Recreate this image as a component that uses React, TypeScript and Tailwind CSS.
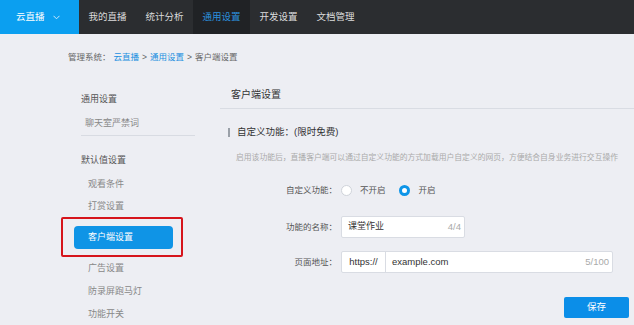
import React from "react";

const font = { fontFamily: '"Liberation Sans", "Noto Sans CJK SC", sans-serif' };

function Radio({ checked }: { checked?: boolean }) {
  return checked ? (
    <span className="w-[11px] h-[11px] rounded-full border-[3px] border-[#0e95e8] bg-white" />
  ) : (
    <span className="w-[11px] h-[11px] rounded-full border border-[#cfd3da] bg-white" />
  );
}

export default function App() {
  const tabs = ["我的直播", "统计分析", "通用设置", "开发设置", "文档管理"];
  return (
    <div style={font} className="w-[634px] h-[325px] overflow-hidden bg-[#edeef3] flex flex-col">
      {/* top nav */}
      <div className="h-[34px] shrink-0 flex bg-[#2b2d30]">
        <div className="w-[79px] bg-[#0b9ff0] flex items-center pl-[16px] gap-[8px] text-white text-[9.5px]">
          <span>云直播</span>
          <svg width="7" height="5" viewBox="0 0 7 5" className="mt-[1px]">
            <path d="M0.5 0.8 L3.5 3.8 L6.5 0.8" fill="none" stroke="#cfe9fb" strokeWidth="1" />
          </svg>
        </div>
        {tabs.map((t, i) => (
          <div
            key={t}
            className={
              i === 2
                ? "w-[57px] flex items-center justify-center text-[9.5px] bg-[#202225] text-[#2b8fdc]"
                : "w-[57px] flex items-center justify-center text-[9.5px] text-[#dcdcdc]"
            }
          >
            {t}
          </div>
        ))}
      </div>

      {/* breadcrumb */}
      <div className="pl-[68px] pt-[17px] h-[46px] shrink-0 text-[8.5px] leading-[12px] text-[#666]">
        <span>管理系统：</span>
        <span className="ml-[3px] text-[#1a8fe0]">云直播</span>
        <span className="mx-[3px]">&gt;</span>
        <span className="text-[#1a8fe0]">通用设置</span>
        <span className="mx-[3px]">&gt;</span>
        <span>客户端设置</span>
      </div>

      {/* body */}
      <div className="flex flex-1">
        {/* sidebar */}
        <div className="ml-[61px] w-[140px] flex flex-col text-[9px]">
          <div className="h-[24px] mt-[8px] flex items-center pl-[20px] text-[#555]">通用设置</div>
          <div className="h-[23px] flex items-center pl-[24px] text-[#888]">聊天室严禁词</div>
          <div className="ml-[20px] w-[114px] h-px bg-[#d8dbe2]" />
          <div className="h-[24px] mt-[13px] flex items-center pl-[20px] text-[#555]">默认值设置</div>
          <div className="h-[24px] flex items-center pl-[27px] text-[#888]">观看条件</div>
          <div className="h-[20px] flex items-center pl-[27px] text-[#888]">打赏设置</div>
          <div className="w-[122px] h-[40px] border-2 border-[#d6141b] rounded-[2px] pt-[7px] pl-[11px]">
            <div className="w-[99px] h-[23px] rounded-[4px] bg-[#0f94e6] text-white flex items-center pl-[14px]">
              客户端设置
            </div>
          </div>
          <div className="h-[23px] flex items-center pl-[27px] text-[#888]">广告设置</div>
          <div className="h-[23px] flex items-center pl-[27px] text-[#888]">防录屏跑马灯</div>
          <div className="h-[23px] flex items-center pl-[27px] text-[#888]">功能开关</div>
        </div>

        {/* main */}
        <div className="ml-[19px] flex-1 flex flex-col">
          <div className="h-[29px] flex items-center pl-[11px] text-[10px] text-[#333] border-b border-[#d9dce3]">
            客户端设置
          </div>
          <div className="mt-[16px] h-[14px] flex items-center pl-[8px]">
            <span className="w-[2px] h-[9px] bg-[#9aa0a8]" />
            <span className="ml-[7px] text-[9.5px] text-[#333]">自定义功能：(限时免费)</span>
          </div>
          <div className="mt-[13px] h-[12px] flex items-center pl-[16px] text-[7.8px] text-[#aaa] whitespace-nowrap">
            启用该功能后，直播客户端可以通过自定义功能的方式加载用户自定义的网页，方便结合自身业务进行交互操作
          </div>

          {/* radio row */}
          <div className="mt-[16px] h-[20px] flex items-center text-[8.5px] text-[#555]">
            <div className="w-[117px] text-right">自定义功能：</div>
            <div className="ml-[4px] flex items-center">
              <Radio />
              <span className="ml-[8px] text-[#555]">不开启</span>
              <span className="ml-[13px] flex"><Radio checked /></span>
              <span className="ml-[9px] text-[#555]">开启</span>
            </div>
          </div>

          {/* name row */}
          <div className="mt-[16px] h-[22px] flex items-center text-[8.5px] text-[#555]">
            <div className="w-[117px] text-right">功能的名称：</div>
            <div className="ml-[4px] w-[124px] h-[22px] bg-white border border-[#d9dce3] rounded-[2px] flex items-center justify-between pl-[6px] pr-[3px]">
              <span className="text-[9px] text-[#333]">课堂作业</span>
              <span className="text-[9.5px] text-[#aaa]">4/4</span>
            </div>
          </div>

          {/* url row */}
          <div className="mt-[13px] h-[22px] flex items-center text-[8.5px] text-[#555]">
            <div className="w-[117px] text-right">页面地址：</div>
            <div className="ml-[4px] w-[272px] h-[22px] bg-white border border-[#d9dce3] rounded-[2px] flex items-center">
              <div className="w-[44px] h-full border-r border-[#d9dce3] flex items-center justify-center text-[9.5px] text-[#333]">
                https://
              </div>
              <div className="flex-1 flex items-center justify-between pl-[6px] pr-[3px]">
                <span className="text-[9.5px] text-[#333]">example.com</span>
                <span className="text-[9.5px] text-[#aaa]">5/100</span>
              </div>
            </div>
          </div>

          {/* save */}
          <div className="mt-[24px] flex justify-end pr-[5px]">
            <div className="w-[65px] h-[21px] rounded-[2px] bg-[#0b8ee8] text-white text-[9.5px] flex items-center justify-center">
              保存
            </div>
          </div>
        </div>
      </div>
    </div>
  );
}
